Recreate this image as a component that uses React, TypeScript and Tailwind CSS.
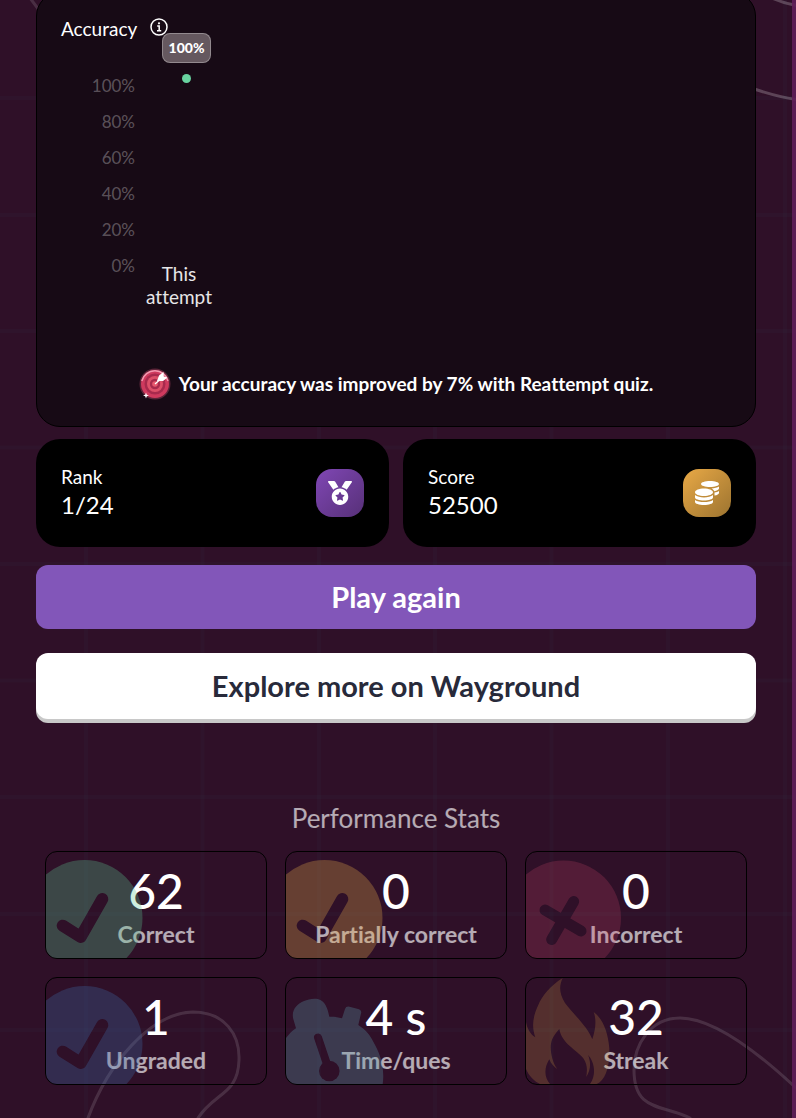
import type { ReactNode } from "react";
import { FaCoins, FaMedal } from "react-icons/fa";

const axis = ["100%", "80%", "60%", "40%", "20%", "0%"];
const columns = [86, 202.5, 319, 435, 551.5, 668, 785];
const rows = [98, 215, 331, 447.5, 564, 680.5, 797, 914, 1030];

function Backdrop() {
  return (
    <svg
      aria-hidden="true"
      className="absolute inset-0 h-full w-full"
      viewBox="0 0 796 1118"
      preserveAspectRatio="xMidYMin slice"
      fill="none"
    >
      <g stroke="#3a5a6a" strokeOpacity="0.07" strokeWidth="4">
        {columns.map((x) => (
          <path key={x} d={`M${x} 0V1118`} />
        ))}
        {rows.map((y) => (
          <path key={y} d={`M0 ${y}H796`} />
        ))}
      </g>
      <g stroke="#ffffff" strokeOpacity="0.13" strokeWidth="3" strokeLinecap="round">
        <path d="M88 1118C108 1064 150 1013 193 1012C225 1012 240 1035 239 1060C238 1095 215 1092 198 1118" />
        <path d="M796 1088C750 1045 710 1018 680 1018C650 1018 634 1045 634 1070C634 1112 662 1104 690 1118" />
        <path d="M740 84Q775 97 800 100" strokeOpacity="0.22" />
        <path d="M772 -2Q785 4 800 6" strokeOpacity="0.22" />
        <path d="M30 -2L42 14" />
      </g>
    </svg>
  );
}

function TargetIcon() {
  return (
    <svg aria-hidden="true" className="size-8 shrink-0" viewBox="0 0 32 32">
      <circle cx="16" cy="16" r="15.5" fill="#d9557a" opacity="0.35" />
      <circle cx="16" cy="16" r="14" fill="#cf3a5e" />
      <path d="M2.8 13A13.5 13.5 0 0 1 29 13" fill="none" stroke="#f29ab0" strokeWidth="1.5" />
      <circle cx="16" cy="16" r="10.5" fill="#a82a4d" />
      <circle cx="16" cy="16" r="8" fill="#dd5069" />
      <circle cx="16" cy="16" r="5.2" fill="#a82a4d" />
      <circle cx="16" cy="16" r="2.8" fill="#e8586e" />
      <path d="M16 16L24 9" stroke="#fff" strokeWidth="1.2" />
      <path d="M18 13L20 7.500L24.500 4L24.800 8.500L28.500 9.500L24 13Z" fill="#fff" />
      <path d="M7 24.500l.8 2.200 2.200.8-2.200.8-.8 2.200-.8-2.200-2.200-.8 2.200-.8z" fill="#fff" />
    </svg>
  );
}

function Art({ color, children }: { color: string; children: ReactNode }) {
  return (
    <svg
      aria-hidden="true"
      className={`pointer-events-none absolute left-0 top-0 h-[106px] w-[120px] ${color}`}
      viewBox="0 0 120 106"
      fill="currentColor"
    >
      {children}
    </svg>
  );
}

function Check({ id, color }: { id: string; color: string }) {
  return (
    <Art color={color}>
      <mask id={id}>
        <rect width="120" height="106" fill="#fff" />
        <path
          d="M16.700 73.700L34.700 85L56.300 47"
          fill="none"
          stroke="#000"
          strokeWidth="12"
          strokeLinecap="round"
          strokeLinejoin="round"
        />
      </mask>
      <circle cx="38.500" cy="66" r="58" mask={`url(#${id})`} />
    </Art>
  );
}

function Cross() {
  return (
    <Art color="text-[#e35173] opacity-20">
      <mask id="cross">
        <rect width="120" height="106" fill="#fff" />
        <path d="M19 58L55 79M47.700 49.500L25.700 87.500" stroke="#000" strokeWidth="11" strokeLinecap="round" />
      </mask>
      <circle cx="37.500" cy="66" r="57.500" mask="url(#cross)" />
    </Art>
  );
}

function Stopwatch() {
  return (
    <Art color="text-[#5e9cad] opacity-30">
      <mask id="hand">
        <rect width="120" height="106" fill="#fff" />
        <path d="M32 59.500L43.300 93" stroke="#000" strokeWidth="8" strokeLinecap="round" />
        <circle cx="43.300" cy="93" r="10.300" fill="#000" />
      </mask>
      <path
        mask="url(#hand)"
        d="M0 60C3 56 6 53 10 50.300L7.300 41C5 32 11 26 18 23C23 21 31 19 36 23C40 26 42 32 43.300 38.700C48 38.500 52 39 56 40.300L59 31Q60 28 63.500 28.700L73 31.300Q76 32.500 75 35.500L72.300 47C80 52 84 57 87.300 63.700C94 75 99 90 96.700 106H0Z"
      />
    </Art>
  );
}

function Flame() {
  return (
    <Art color="text-[#e8af46] opacity-20">
      <path d="M36.700 0C25 7 16 18 12.300 27C6 40 6 50 9.300 59.300C4 56 1 50 0 43.700V91C3 98 8 103 14 106H24C18 99 18 90 23.300 81.300C25 86 28 89 31.300 91C26 84 24 72 25 66C26 59 30 55 33.300 51C36 66 50 71 57.300 80.300C62 87 61 93 60.300 99C65 91 65 84 62 77C68 83 71 96 64 106H70.700C79 102 84 90 83.300 70C82 54 77 41 67.700 34C71 43 69 53 66.300 61.300C62 49 47 36 39 25C33 15 33 8 36.700 0Z" />
    </Art>
  );
}

function StatCard({ value, label, children }: { value: string; label: string; children: ReactNode }) {
  return (
    <div className="relative flex h-[108px] flex-col items-center overflow-hidden rounded-xl border border-black pt-[15px]">
      <dd className="order-first text-5xl leading-12 font-medium text-white">{value}</dd>
      <dt className="mt-[5px] text-[23px] leading-7 font-bold text-white/65">{label}</dt>
      {children}
    </div>
  );
}

function SummaryCard({ label, value, tone, icon }: { label: string; value: string; tone: string; icon: ReactNode }) {
  return (
    <div className="flex h-[108px] items-center justify-between rounded-3xl bg-black px-[25px]">
      <div className="pb-1">
        <div className="text-[19px] leading-7">{label}</div>
        <div className="text-2xl leading-7">{value}</div>
      </div>
      <div className={`flex size-12 items-center justify-center rounded-2xl bg-linear-to-br ${tone}`}>{icon}</div>
    </div>
  );
}

export default function App() {
  return (
    <div className="relative flex min-h-screen overflow-hidden bg-[#2f1028] font-['Lato','Open_Sans',sans-serif] text-white [font-variant-ligatures:none]">
      <Backdrop />
      <main className="relative flex-1 px-9 pb-8">
        <section className="-mt-2 rounded-3xl border border-black bg-[#170a15] px-6 pt-[22px] pb-[26px]">
          <h2 className="flex items-center gap-3 text-[19px] leading-7">
            Accuracy
            <button type="button" aria-label="About accuracy" className="mb-1">
              <svg aria-hidden="true" className="size-5" viewBox="0 0 20 20" fill="none" stroke="#fff" strokeWidth="1.500">
                <circle cx="10" cy="10" r="8" />
                <path d="M8.200 9H10.200V13.500M8 13.700H12.200" />
                <circle cx="10" cy="6.300" r="1.100" fill="#fff" stroke="none" />
              </svg>
            </button>
          </h2>
          <div className="mt-[25px] flex">
            <ul className="w-[74px] text-right text-[17px] leading-9 text-white/30">
              {axis.map((tick) => (
                <li key={tick}>{tick}</li>
              ))}
            </ul>
            <div className="flex w-[88px] flex-col justify-between">
              <div className="relative mt-[6px] ml-[47px] size-[9px] rounded-full bg-[#69d3a0]">
                <span className="absolute bottom-5 left-1/2 -translate-x-1/2 rounded-lg border border-white/30 bg-[#65585f] px-[6px] text-sm leading-7 font-black">
                  100%
                </span>
              </div>
              <div className="-mb-6 text-center text-[19px] leading-[23px] text-white/90">
                This
                <br />
                attempt
              </div>
            </div>
          </div>
          <p className="mt-21 flex items-center justify-center gap-2 text-[19px] leading-8 font-bold">
            <TargetIcon />
            Your accuracy was improved by 7% with Reattempt quiz.
          </p>
        </section>

        <section className="mt-3 grid grid-cols-2 gap-[14px]">
          <SummaryCard
            label="Rank"
            value="1/24"
            tone="from-[#8047b5] to-[#573078]"
            icon={<FaMedal aria-hidden="true" className="size-6" />}
          />
          <SummaryCard
            label="Score"
            value="52500"
            tone="from-[#e9a946] to-[#9d7430]"
            icon={<FaCoins aria-hidden="true" className="size-6" />}
          />
        </section>

        <button type="button" className="mt-[18px] block h-16 w-full rounded-xl bg-[#8256b9] text-[29px] font-bold">
          Play again
        </button>
        <button
          type="button"
          className="mt-6 block h-[66px] w-full rounded-xl bg-white text-[29px] font-bold text-[#282a3a] shadow-[0_4px_0_#c8c8c8]"
        >
          Explore more on Wayground
        </button>

        <section className="mt-[83px] px-[9px]">
          <h2 className="text-center text-[26px] leading-8 text-white/65">Performance Stats</h2>
          <dl className="mt-[17px] grid grid-cols-3 gap-[18px]">
            <StatCard value="62" label="Correct">
              <Check id="correct" color="text-[#5fc891] opacity-30" />
            </StatCard>
            <StatCard value="0" label="Partially correct">
              <Check id="partial" color="text-[#e6ac4c] opacity-30" />
            </StatCard>
            <StatCard value="0" label="Incorrect">
              <Cross />
            </StatCard>
            <StatCard value="1" label="Ungraded">
              <Check id="ungraded" color="text-[#3f6ead] opacity-30" />
            </StatCard>
            <StatCard value="4 s" label="Time/ques">
              <Stopwatch />
            </StatCard>
            <StatCard value="32" label="Streak">
              <Flame />
            </StatCard>
          </dl>
        </section>
      </main>
      <div className="relative w-1 bg-[#5f1f58]/90" />
    </div>
  );
}
